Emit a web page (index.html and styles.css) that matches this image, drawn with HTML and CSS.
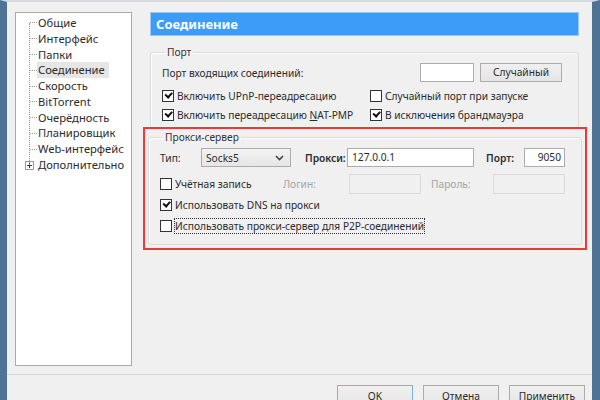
FILE: index.html
```html
<!DOCTYPE html>
<html lang="ru">
<head>
  <meta charset="UTF-8">
  <meta name="viewport" content="width=device-width, initial-scale=1.0">
  <title>Настройки</title>
  <link rel="stylesheet" href="styles.css">
</head>
<body>

  <div class="main">
    <!-- дерево разделов -->
    <div class="tree">
      <ul class="tree-list">
        <li><span class="dots"></span><span class="item">Общие</span></li>
        <li><span class="dots"></span><span class="item">Интерфейс</span></li>
        <li><span class="dots"></span><span class="item">Папки</span></li>
        <li><span class="dots"></span><span class="item selected">Соединение</span></li>
        <li><span class="dots"></span><span class="item">Скорость</span></li>
        <li><span class="dots"></span><span class="item">BitTorrent</span></li>
        <li><span class="dots"></span><span class="item">Очерёдность</span></li>
        <li><span class="dots"></span><span class="item">Планировщик</span></li>
        <li><span class="dots"></span><span class="item">Web-интерфейс</span></li>
        <li class="last">
          <svg class="plus" width="9" height="9" viewBox="0 0 9 9"><rect x="0.5" y="0.5" width="8" height="8" fill="#fff" stroke="#999"/><path d="M2 4.5h5M4.5 2v5" stroke="#333"/></svg>
          <span class="item">Дополнительно</span>
        </li>
      </ul>
    </div>

    <div class="pane">
      <div class="header">Соединение</div>

      <fieldset class="group">
        <legend>Порт</legend>
        <div class="row">
          <span class="grow">Порт входящих соединений:</span>
          <span class="input port-in"></span>
          <span class="btn small">Случайный</span>
        </div>
        <div class="row two gap">
          <label class="check"><span class="cb on"></span><span>Включить UPnP-переадресацию</span></label>
          <label class="check"><span class="cb"></span><span>Случайный порт при запуске</span></label>
        </div>
        <div class="row two">
          <label class="check"><span class="cb on"></span><span>Включить переадресацию <u>N</u>AT-PMP</span></label>
          <label class="check"><span class="cb on"></span><span>В исключения брандмауэра</span></label>
        </div>
      </fieldset>

      <div class="mark">
        <fieldset class="group proxy">
          <legend>Прокси-сервер</legend>
          <div class="row first">
            <span class="lbl w-type">Тип:</span>
            <span class="select">Socks5<svg width="9" height="6" viewBox="0 0 9 6"><path d="M1 1l3.5 3.5L8 1" fill="none" stroke="#444" stroke-width="1.6"/></svg></span>
            <span class="lbl strong w-proxy">Прокси:</span>
            <span class="input w-host">127.0.0.1</span>
            <span class="lbl strong w-port">Порт:</span>
            <span class="input w-num">9050</span>
          </div>
          <div class="row auth">
            <label class="check w-acc"><span class="cb"></span><span>Учётная запись</span></label>
            <span class="lbl off w-login">Логин:</span>
            <span class="input off w-field"></span>
            <span class="lbl off w-pass">Пароль:</span>
            <span class="input off w-field"></span>
          </div>
          <div class="row">
            <label class="check"><span class="cb on"></span><span>Использовать DNS на прокси</span></label>
          </div>
          <div class="row p2p">
            <label class="check"><span class="cb"></span><span class="focus">Использовать прокси-сервер для P2P-соединений</span></label>
          </div>
        </fieldset>
      </div>
    </div>
  </div>

  <div class="footer">
    <span class="btn default">OK</span>
    <span class="btn">Отмена</span>
    <span class="btn">Применить</span>
  </div>

</body>
</html>
```

FILE: styles.css
```css
body {
  margin: 0;
  width: 585px;
  height: 398px;
  overflow: hidden;
  background: #f0f0f0;
  border-left: 7px solid #4f7394;
  border-right: 8px solid #4f7394;
  border-top: 2px solid #d4dae0;
  color: #2b2b2b;
  font-family: "Noto Sans", "Open Sans", sans-serif;
  font-size: 10.2px;
}

.main {
  display: flex;
  gap: 18px;
  padding: 10px 0 0 8px;
}

/* дерево */
.tree {
  width: 115px;
  height: 352px;
  background: #fff;
  border: 1px solid #a9a9a9;
}
.tree-list {
  list-style: none;
  margin: 2px 0 0 0;
  padding: 0 0 0 9px;
  position: relative;
}
.tree-list::before {
  content: "";
  position: absolute;
  left: 13px;
  top: 8px;
  height: 142px;
  border-left: 1px dotted #999;
}
.tree-list li {
  display: flex;
  align-items: center;
  height: 15.8px;
  font-size: 11.2px;
}
.dots {
  width: 7px;
  margin-left: 5px;
  border-top: 1px dotted #999;
}
.plus { margin-right: 3px; }
.item { padding: 0 1px; line-height: 16px; }
.item.selected { background: #e6e6e6; padding-right: 4px; }

/* правая часть */
.pane { width: 429px; }

.header {
  height: 22px;
  line-height: 22px;
  background: #3d9cf8;
  border: 1px solid #9cc8f0;
  color: #fff;
  font-weight: bold;
  font-size: 13px;
  padding-left: 5px;
}

.group {
  margin: 8px 0 0 0;
  padding: 3px 16px 3px 11px;
  border: 1px solid #dcdcdc;
  border-radius: 3px;
  box-shadow: inset 1px 1px 0 #fff;
}
.group legend {
  padding: 0 2px;
  margin-left: 3px;
  color: #333;
  line-height: 16px;
}

.row {
  display: flex;
  align-items: center;
  height: 19px;
}
.row.gap { margin-top: 4px; }
.row.two label:first-child { width: 208px; }
.grow { flex: 1; }

.check { display: flex; align-items: center; }
.cb {
  width: 10px;
  height: 10px;
  border: 1px solid #333;
  background: #fff;
  margin-right: 3px;
  display: flex;
  align-items: center;
  justify-content: center;
}
.cb.on::after {
  content: "";
  width: 5px;
  height: 2.5px;
  border-left: 2px solid #111;
  border-bottom: 2px solid #111;
  transform: translateY(-1px) rotate(-48deg);
}

.input {
  height: 19px;
  line-height: 17px;
  background: #fff;
  border: 1px solid #acacac;
  padding: 0 4px;
  box-sizing: border-box;
}
.input.off { background: #f0f0f0; border-color: #d9d9d9; }
.port-in { width: 54px; }

.btn {
  display: inline-block;
  box-sizing: border-box;
  width: 76px;
  height: 22px;
  line-height: 20px;
  text-align: center;
  border: 1px solid #acacac;
  background: linear-gradient(#f0f0f0, #e5e5e5);
}
.btn.small { width: 82px; height: 19px; line-height: 17px; margin-left: 6px; }
.btn.default { border-color: #7fb0e6; }

/* красная рамка */
.mark {
  margin: -1px -8px 0 -7px;
  border: 2px solid #e53b3b;
  padding: 0 5px 3px 3px;
}
.proxy { margin-top: 0; padding-bottom: 9px; }
.proxy .row.auth { height: 20px; margin: 7px 0 1px; }
.proxy .row.p2p { margin-top: 2px; }

.lbl { display: inline-block; }
.lbl.strong { font-weight: 600; }
.lbl.off { color: #a3a3a3; }
.w-type { width: 41px; }
.w-proxy { width: 42px; margin-left: 14px; }
.w-port { width: 38px; margin-left: 12px; }
.w-host { width: 127px; }
.w-num { width: 41px; text-align: right; padding-right: 3px; }
.w-acc { width: 123px; }
.w-login { width: 66px; }
.w-pass { width: 62px; margin-left: 10px; }
.w-field { width: 72px; height: 20px; }

.select {
  width: 90px;
  height: 19px;
  box-sizing: border-box;
  display: flex;
  align-items: center;
  justify-content: space-between;
  padding: 0 6px 0 4px;
  border: 1px solid #acacac;
  background: linear-gradient(#f2f2f2, #e6e6e6);
}

.focus { outline: 1px dotted #333; }

.footer {
  margin-top: 8px;
  border-top: 1px solid #d5d5d5;
  display: flex;
  justify-content: flex-end;
  gap: 10px;
  padding: 10px 7px 0 0;
}
```
